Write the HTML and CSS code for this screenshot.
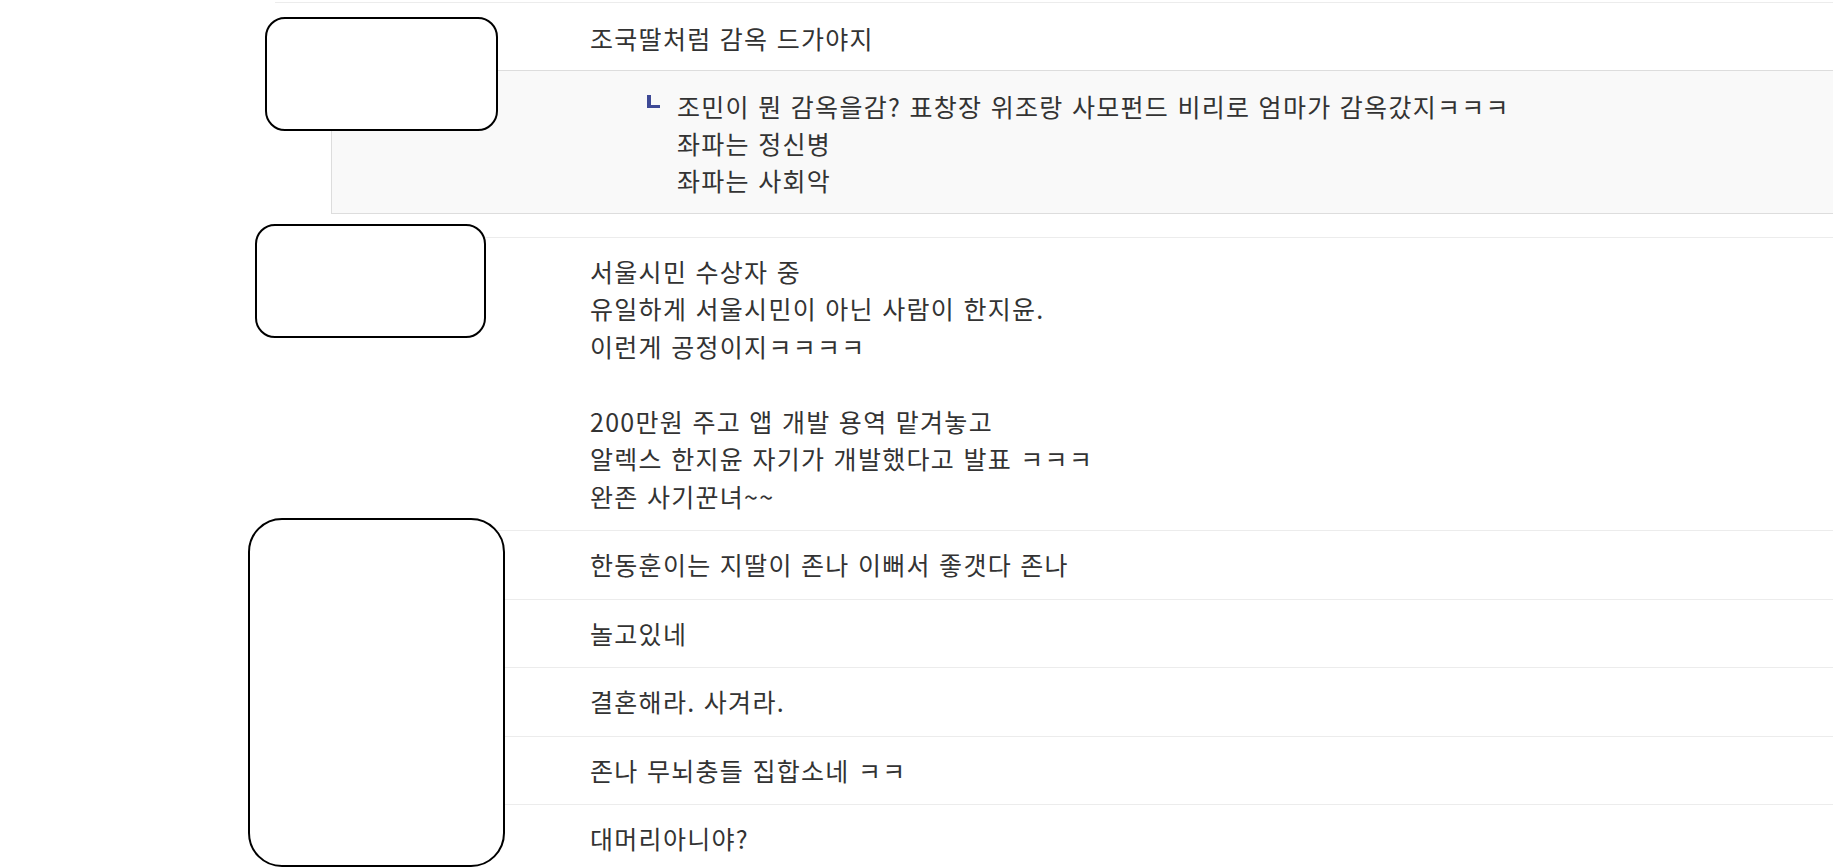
FILE: index.html
```html
<!DOCTYPE html>
<html lang="ko">
<head>
<meta charset="utf-8">
<title>댓글</title>
<link rel="stylesheet" href="styles.css">
</head>
<body>
<div class="list">
  <div class="row">
    <div class="row-body first">조국딸처럼 감옥 드가야지</div>
    <div class="reply">
      <span class="reply-mark"></span>
      <div class="reply-text">조민이 뭔 감옥을감? 표창장 위조랑 사모펀드 비리로 엄마가 감옥갔지ㅋㅋㅋ<br>좌파는 정신병<br>좌파는 사회악</div>
    </div>
  </div>
  <div class="row">
    <div class="row-body">서울시민 수상자 중<br>유일하게 서울시민이 아닌 사람이 한지윤.<br>이런게 공정이지ㅋㅋㅋㅋ<br><br>200만원 주고 앱 개발 용역 맡겨놓고<br>알렉스 한지윤 자기가 개발했다고 발표 ㅋㅋㅋ<br>완존 사기꾼녀~~</div>
  </div>
  <div class="row"><div class="row-body">한동훈이는 지딸이 존나 이뻐서 좋갯다 존나</div></div>
  <div class="row"><div class="row-body">놀고있네</div></div>
  <div class="row"><div class="row-body">결혼해라. 사겨라.</div></div>
  <div class="row"><div class="row-body">존나 무뇌충들 집합소네 ㅋㅋ</div></div>
  <div class="row"><div class="row-body">대머리아니야?</div></div>
</div>
<div class="mask mask-1"></div>
<div class="mask mask-2"></div>
<div class="mask mask-3"></div>
</body>
</html>
```

FILE: styles.css
```css
html, body {
  margin: 0;
  padding: 0;
  background: #ffffff;
  overflow: hidden;
}
body {
  font-family: "Noto Sans CJK KR", "Noto Sans", sans-serif;
  font-size: 25px;
  letter-spacing: 1.3px;
  color: #333333;
  width: 1833px;
  height: 868px;
  position: relative;
}
.list {
  margin-left: 275px;
  padding-top: 2px;
}
.row {
  border-top: 1px solid #ececec;
}
.row-body {
  padding: 15px 0 15px 315px;
  line-height: 37.5px;
}
.row-body.first {
  padding-top: 17px;
  padding-bottom: 12px;
}
.reply {
  display: flex;
  align-items: flex-start;
  margin: 0 0 23px 56px;
  background: #f9f9f9;
  border: 1px solid #dddddd;
  border-right: 0;
  padding: 17px 0 14px 315px;
}
.reply-mark {
  flex: none;
  width: 9px;
  height: 10px;
  margin-top: 7px;
  margin-right: 17px;
  border-left: 4px solid #3e4a96;
  border-bottom: 3px solid #3e4a96;
}
.reply-text {
  line-height: 37px;
}
.mask {
  position: absolute;
  background: #ffffff;
  border: 2px solid #000000;
  box-sizing: border-box;
}
.mask-1 {
  left: 265px;
  top: 17px;
  width: 233px;
  height: 114px;
  border-radius: 20px;
}
.mask-2 {
  left: 255px;
  top: 224px;
  width: 231px;
  height: 114px;
  border-radius: 20px;
}
.mask-3 {
  left: 248px;
  top: 518px;
  width: 257px;
  height: 349px;
  border-radius: 34px;
}
```
